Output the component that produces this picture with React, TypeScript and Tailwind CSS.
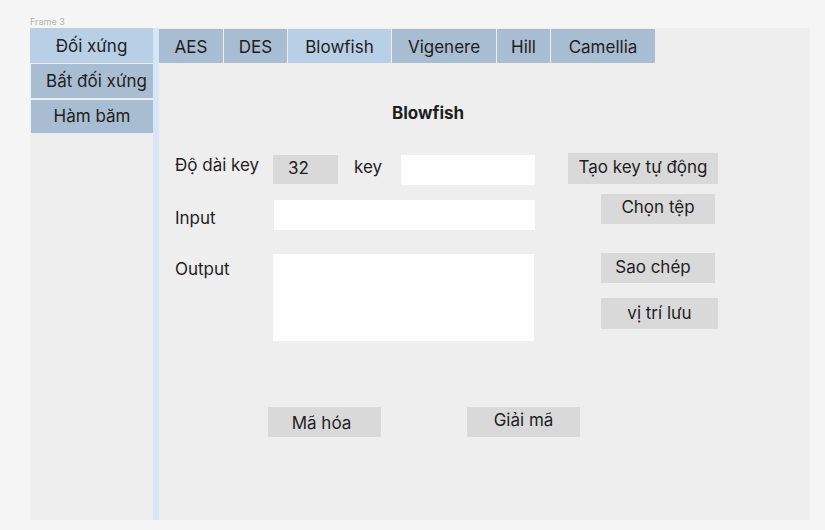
const tabs = [
  { label: "AES", w: "w-[64px]" },
  { label: "DES", w: "w-[63px]" },
  { label: "Blowfish", w: "w-[103px]", active: true },
  { label: "Vigenere", w: "w-[104px]" },
  { label: "Hill", w: "w-[53px]" },
  { label: "Camellia", w: "w-[104px]" },
];

const GrayBtn = ({ children, className = "" }: { children: React.ReactNode; className?: string }) => (
  <div className={`shrink-0 flex items-center justify-center bg-[#d9d9d9] text-[17px] text-[#1e1e1e] ${className}`}>
    {children}
  </div>
);

export default function App() {
  return (
    <div className="w-[825px] h-[530px] bg-[#f5f5f5] pl-[30px] pt-[15px] font-['Inter',sans-serif] text-[#1e1e1e] overflow-hidden">
      <div className="text-[9px] leading-[13px] text-[#b3b3b3]">Frame 3</div>
      <div className="flex w-[780px] h-[492px] bg-[#eeeeee]">
        {/* sidebar */}
        <div className="flex flex-col w-[123px] shrink-0">
          <div className="h-[35px] flex items-center justify-center bg-[#b9cfe6] text-[17px] pt-[3px]">Đối xứng</div>
          <div className="ml-px mt-px h-[34px] flex items-center justify-center bg-[#a9bdd2] text-[17px] pt-px pl-[9px]">Bất đối xứng</div>
          <div className="ml-px mt-[2px] h-[33px] flex items-center justify-center bg-[#a9bdd2] text-[17px]">Hàm băm</div>
        </div>
        <div className="w-[6px] shrink-0 bg-[#d6e6f6]" />

        {/* main */}
        <div className="flex-1 flex flex-col">
          <div className="flex gap-px mt-px">
            {tabs.map((t) => (
              <div
                key={t.label}
                className={`h-[34px] pt-[3px] flex items-center justify-center text-[17px] ${t.w} ${t.active ? "bg-[#b9cfe6]" : "bg-[#a9bdd2]"}`}
              >
                {t.label}
              </div>
            ))}
          </div>

          <div className="mt-[38px] ml-[233px] text-[17px] font-bold leading-[24px]">Blowfish</div>

          <div className="flex mt-[28px] ml-[16px]">
            {/* left column */}
            <div className="flex flex-col w-[360px] shrink-0">
              <div className="flex items-center h-[32px]">
                <span className="w-[98px] shrink-0 text-[17px] -mt-[7px]">Độ dài key</span>
                <div className="w-[65px] h-[29px] shrink-0 bg-[#d9d9d9] text-[17px] flex items-center pl-[15px] pb-[2px] mt-[1px]">32</div>
                <span className="ml-[16px] w-[47px] shrink-0 text-[17px] -mt-[3px]">key</span>
                <div className="w-[134px] h-[30px] shrink-0 bg-white mt-[2px]" />
              </div>
              <div className="flex items-center mt-[15px] h-[30px]">
                <span className="w-[99px] shrink-0 text-[17px] mt-[7px]">Input</span>
                <div className="w-[261px] h-[30px] shrink-0 bg-white" />
              </div>
              <div className="flex mt-[24px]">
                <span className="w-[98px] shrink-0 text-[17px] mt-[3px]">Output</span>
                <div className="w-[261px] h-[87px] shrink-0 bg-white" />
              </div>
              <div className="flex mt-[66px] ml-[93px]">
                <GrayBtn className="w-[113px] h-[30px] pt-[4px] pr-[6px]">Mã hóa</GrayBtn>
                <GrayBtn className="ml-[86px] w-[113px] h-[30px] pb-[3px]">Giải mã</GrayBtn>
              </div>
            </div>

            {/* right column */}
            <div className="flex flex-col ml-[33px]">
              <GrayBtn className="w-[150px] h-[31px] pb-[2px]">Tạo key tự động</GrayBtn>
              <GrayBtn className="ml-[33px] mt-[10px] w-[114px] h-[30px] pb-[3px]">Chọn tệp</GrayBtn>
              <GrayBtn className="ml-[33px] mt-[29px] w-[114px] h-[30px] pr-[10px]">Sao chép</GrayBtn>
              <GrayBtn className="ml-[33px] mt-[15px] w-[117px] h-[31px] pt-px">vị trí lưu</GrayBtn>
            </div>
          </div>
        </div>
      </div>
    </div>
  );
}
